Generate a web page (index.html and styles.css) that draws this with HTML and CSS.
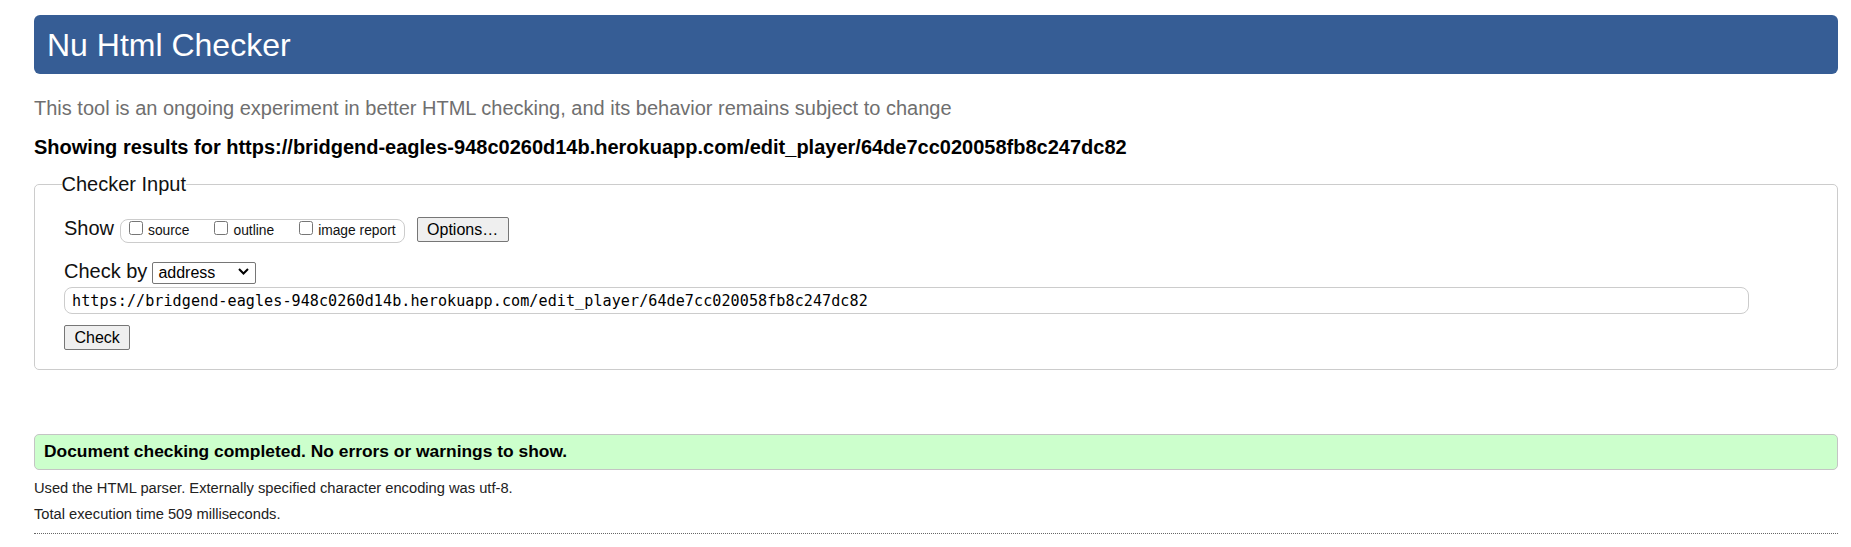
FILE: index.html
```
<!DOCTYPE html>
<html lang="en">
<head>
<meta charset="utf-8">
<title>Showing results for https://bridgend-eagles-948c0260d14b.herokuapp.com/edit_player/64de7cc020058fb8c247dc82 - Nu Html Checker</title>
<link rel="stylesheet" href="styles.css">
</head>
<body>
<h1 class="title">Nu Html Checker</h1>
<p class="about">This tool is an ongoing experiment in better HTML checking, and its behavior remains subject to change</p>
<p class="results-for">Showing results for https://bridgend-eagles-948c0260d14b.herokuapp.com/edit_player/64de7cc020058fb8c247dc82</p>
<form class="checker-form">
<fieldset class="checker-input">
<legend class="checker-legend">Checker Input</legend>
<div class="row show-row">
<span class="row-label">Show</span>
<div class="show-group"><label class="opt"><input type="checkbox" class="cb">source</label><label class="opt"><input type="checkbox" class="cb">outline</label><label class="opt opt-last"><input type="checkbox" class="cb">image report</label></div>
<button type="button" class="btn btn-options">Options…</button>
</div>
<div class="row check-row">
<span class="row-label">Check by</span>
<span class="select-wrap"><select class="select"><option>address</option><option>file upload</option><option>text input</option></select><svg class="chevron" width="11" height="7" viewBox="0 0 11 7" aria-hidden="true"><path d="M1 1 L5.5 5.5 L10 1" fill="none" stroke="#000" stroke-width="2"/></svg></span>
</div>
<div class="url-row"><input type="url" class="url-input" value="https://bridgend-eagles-948c0260d14b.herokuapp.com/edit_player/64de7cc020058fb8c247dc82"></div>
<div class="submit-row"><button type="button" class="btn btn-check">Check</button></div>
</fieldset>
</form>
<div class="success">Document checking completed. No errors or warnings to show.</div>
<p class="details">Used the HTML parser. Externally specified character encoding was utf-8.</p>
<p class="details details-last">Total execution time 509 milliseconds.</p>
<hr class="footer-rule">
</body>
</html>
```
FILE: styles.css
```
html {
  background: #fff;
}
body {
  margin: 0;
  padding: 15px 13px 0 34px;
  font-family: "Liberation Sans", Arial, sans-serif;
  font-size: 20px;
  line-height: 23px;
  color: #000;
}
.title {
  margin: 0;
  background: #365d95;
  color: #fff;
  font-size: 32px;
  font-weight: normal;
  line-height: 38px;
  padding: 11px 12px 10px 13px;
  border-radius: 6px;
}
.about {
  margin: 23px 0 0;
  color: #6f6f6f;
}
.results-for {
  margin: 15.5px 0 0;
  font-weight: bold;
}
.checker-form {
  margin: 14.5px 0 0;
}
.checker-input {
  margin: 0;
  border: 1px solid #cccccc;
  border-radius: 5px;
  padding: 21px 29px 19px;
}
.checker-legend {
  padding: 0;
  margin-left: -2.5px;
  color: #111;
}
.row {
  display: flex;
  align-items: baseline;
}
.row-label {
  color: #111;
}
.show-group {
  display: flex;
  align-items: baseline;
  margin-left: 6px;
  border: 1px solid #cccccc;
  border-radius: 8px;
  padding: 0 8px;
  font-size: 13.8px;
  line-height: 22px;
  color: #111;
}
.opt {
  display: block;
  margin-right: 25px;
}
.opt-last {
  margin-right: 0;
}
.cb {
  width: 14px;
  height: 14px;
  margin: 0 5px 2px 0;
  vertical-align: baseline;
}
.btn {
  font-family: "Liberation Sans", Arial, sans-serif;
  font-size: 16px;
  line-height: 19px;
  padding: 2px 9.5px;
  border: 1px solid #767676;
  border-radius: 2px;
  background: #efefef;
  color: #000;
}
.btn-options {
  margin-left: 12px;
}
.check-row {
  margin-top: 16.5px;
}
.select-wrap {
  position: relative;
  display: inline-block;
  margin-left: 5px;
}
.select {
  appearance: none;
  -webkit-appearance: none;
  width: 104px;
  height: 22px;
  box-sizing: border-box;
  border: 1px solid #767676;
  border-radius: 2px;
  background: #fff;
  padding: 0 5px;
  font-family: "Liberation Sans", Arial, sans-serif;
  font-size: 16px;
  line-height: 20px;
  color: #000;
}
.chevron {
  position: absolute;
  right: 7px;
  top: 8px;
  pointer-events: none;
}
.url-row {
  margin-top: 3.7px;
}
.url-input {
  display: block;
  box-sizing: border-box;
  width: 1685px;
  height: 27px;
  margin: 0;
  padding: 0 7px;
  border: 1px solid #cccccc;
  border-radius: 8px;
  font-family: "DejaVu Sans Mono", "Liberation Mono", monospace;
  font-size: 15.1px;
  letter-spacing: 0.06px;
  color: #000;
  background: #fff;
}
.submit-row {
  margin-top: 10.6px;
}
.success {
  margin-top: 64px;
  background: #ccffcc;
  border: 1px solid #c4c4c4;
  border-radius: 5px;
  padding: 6px 9px 8px;
  font-size: 17.4px;
  line-height: 20px;
  font-weight: bold;
}
.details {
  margin: 10.3px 0 0;
  font-size: 14.7px;
  line-height: 17px;
  color: #222;
}
.details + .details {
  margin-top: 9px;
}
.footer-rule {
  margin: 10px 0 0;
  border: 0;
  border-top: 1px dotted #666;
  height: 0;
}
```
